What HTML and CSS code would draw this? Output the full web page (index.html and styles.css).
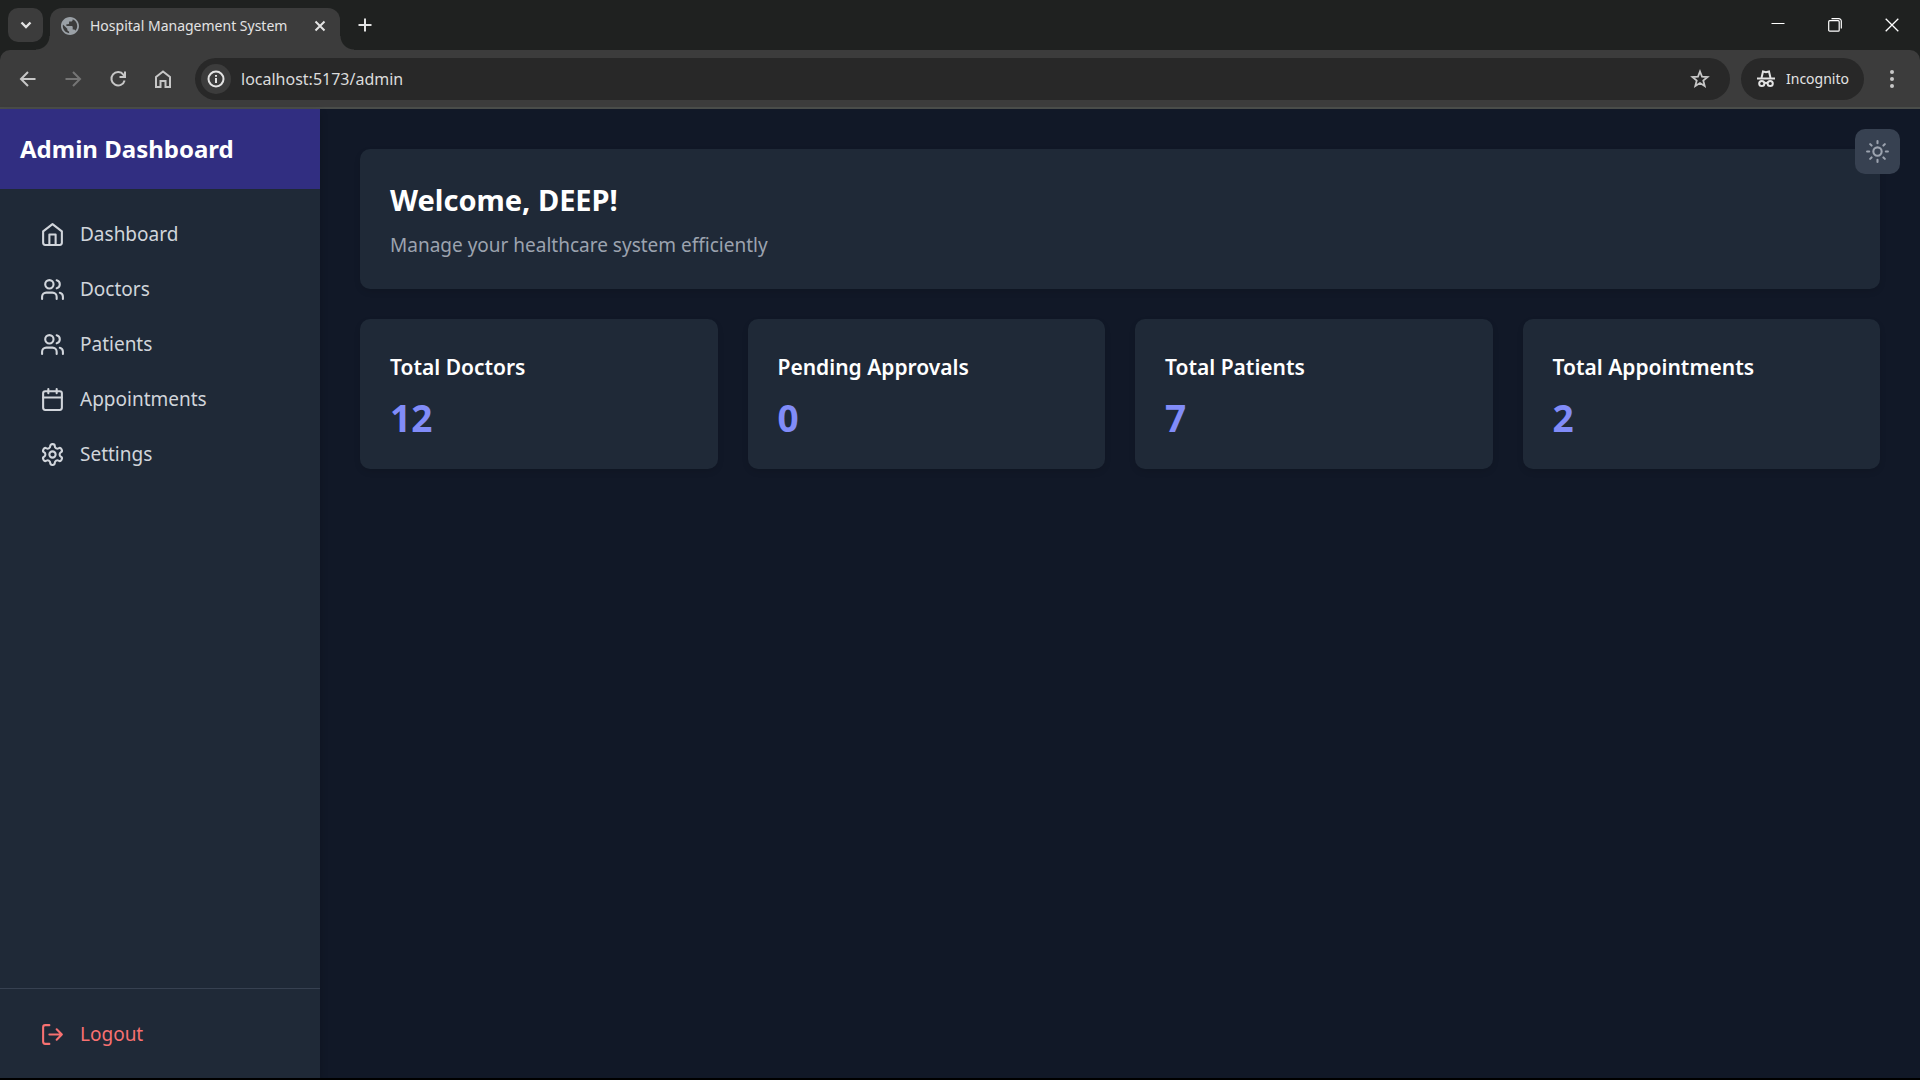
FILE: index.html
```html
<!DOCTYPE html>
<html lang="en">
<head>
<meta charset="utf-8">
<title>Hospital Management System</title>
<link rel="stylesheet" href="styles.css">
</head>
<body>
<div class="browser">
  <header class="tabstrip">
    <button class="tab-search" aria-label="Search tabs"><svg width="16" height="16" viewBox="0 0 16 16" fill="none" stroke="currentColor" stroke-width="2.4"><path d="M3.500 5.500 8 10l4.500-4.500"/></svg></button>
    <div class="tab">
      <svg class="globe" width="18" height="18" viewBox="2 2 20 20"><path fill="#9aa0a6" d="M12 2C6.480 2 2 6.480 2 12s4.480 10 10 10 10-4.480 10-10S17.520 2 12 2zm-1 17.930c-3.950-.49-7-3.850-7-7.930 0-.62.08-1.210.21-1.790L9 15v1c0 1.100.9 2 2 2v1.930zm6.900-2.540c-.26-.81-1-1.390-1.900-1.390h-1v-3c0-.55-.45-1-1-1H8v-2h2c.55 0 1-.45 1-1V7h2c1.100 0 2-.9 2-2v-.41c2.930 1.190 5 4.060 5 7.410 0 2.080-.8 3.970-2.100 5.390z"/></svg>
      <span class="tab-title">Hospital Management System</span>
      <button class="tab-close" aria-label="Close tab"><svg width="12" height="12" viewBox="0 0 12 12" fill="none" stroke="currentColor" stroke-width="2"><path d="m1.500 1.500 9 9m0-9-9 9"/></svg></button>
    </div>
    <button class="new-tab" aria-label="New tab"><svg width="14" height="14" viewBox="0 0 14 14" fill="none" stroke="currentColor" stroke-width="2"><path d="M7 .5v13M.5 7h13"/></svg></button>
    <div class="window-controls">
      <button aria-label="Minimize"><svg width="14" height="14" viewBox="0 0 14 14" stroke="currentColor"><path d="M.5 5.500h13"/></svg></button>
      <button aria-label="Restore"><svg width="14" height="14" viewBox="0 0 14 14" fill="none" stroke="currentColor" stroke-width="1.200"><rect x=".7" y="2.700" width="10.500" height="10.500" rx="1"/><path d="M3.500.7h7.300a2.500 2.500 0 0 1 2.500 2.500v7.300"/></svg></button>
      <button aria-label="Close"><svg width="14" height="14" viewBox="0 0 14 14" stroke="currentColor" stroke-width="1.300"><path d="m.7.7 12.600 12.600m0-12.600L.7 13.300"/></svg></button>
    </div>
  </header>
  <div class="toolbar">
    <button class="tool" aria-label="Back"><svg width="20" height="20" viewBox="0 0 20 20" fill="none" stroke="currentColor" stroke-width="2"><path d="M17.500 10H3.500M10 3l-7 7 7 7"/></svg></button>
    <button class="tool tool-disabled" aria-label="Forward" disabled><svg width="20" height="20" viewBox="0 0 20 20" fill="none" stroke="currentColor" stroke-width="2"><path d="M2.500 10h14M10 3l7 7-7 7"/></svg></button>
    <button class="tool" aria-label="Reload"><svg width="20" height="20" viewBox="0 0 20 20" fill="none" stroke="currentColor" stroke-width="2"><path d="M16.600 11.500A6.700 6.700 0 1 1 15.500 5.800L16.500 7.500M17 2.500V8h-5.500"/></svg></button>
    <button class="tool" aria-label="Home"><svg width="20" height="20" viewBox="0 0 20 20" fill="none" stroke="currentColor" stroke-width="2"><path d="M3 8 10 2.500 17 8v10h-4.500v-6h-5v6H3z"/></svg></button>
    <div class="omnibox">
      <button class="site-info" aria-label="Site information"><svg width="18" height="18" viewBox="0 0 18 18" fill="none" stroke="currentColor" stroke-width="2"><circle cx="9" cy="9" r="7.500"/><path d="M9 8v5M9 5v1.800"/></svg></button>
      <input class="url" type="text" aria-label="Address" value="localhost:5173/admin">
      <button class="bookmark" aria-label="Bookmark this page"><svg width="20" height="20" viewBox="0 0 20 20" fill="none" stroke="currentColor" stroke-width="1.800"><path d="m10 2.500 2 5.100 5.600.4-4.300 3.600 1.400 5.500-4.700-3-4.700 3 1.400-5.500L2.400 8 8 7.600z"/></svg></button>
    </div>
    <button class="incognito"><svg width="20" height="20" viewBox="0 0 20 20" fill="none" stroke="currentColor" stroke-width="2"><path d="M1 9.500h18"/><path d="M5.500 9 7 2.500l3 .8 3-.8L14.500 9"/><circle cx="5.800" cy="14.500" r="2.600"/><circle cx="14.200" cy="14.500" r="2.600"/><path d="M8.400 14.300q1.600-1 3.200 0"/></svg>Incognito</button>
    <button class="menu" aria-label="Menu"><svg width="6" height="20" viewBox="0 0 6 20" fill="currentColor"><circle cx="3" cy="3" r="2"/><circle cx="3" cy="10" r="2"/><circle cx="3" cy="17" r="2"/></svg></button>
  </div>
  <div class="app">
    <aside class="sidebar">
      <h2 class="brand">Admin Dashboard</h2>
      <nav class="nav">
        <a class="nav-item" href="#dashboard"><svg class="icon" viewBox="0 0 24 24"><path d="m3 9 9-7 9 7v11a2 2 0 0 1-2 2H5a2 2 0 0 1-2-2z"/><path d="M9 22V12h6v10"/></svg>Dashboard</a>
        <a class="nav-item" href="#doctors"><svg class="icon" viewBox="0 0 24 24"><path d="M16 21v-2a4 4 0 0 0-4-4H6a4 4 0 0 0-4 4v2"/><circle cx="9" cy="7" r="4"/><path d="M22 21v-2a4 4 0 0 0-3-3.870M16 3.130a4 4 0 0 1 0 7.750"/></svg>Doctors</a>
        <a class="nav-item" href="#patients"><svg class="icon" viewBox="0 0 24 24"><path d="M16 21v-2a4 4 0 0 0-4-4H6a4 4 0 0 0-4 4v2"/><circle cx="9" cy="7" r="4"/><path d="M22 21v-2a4 4 0 0 0-3-3.870M16 3.130a4 4 0 0 1 0 7.750"/></svg>Patients</a>
        <a class="nav-item" href="#appointments"><svg class="icon" viewBox="0 0 24 24"><rect x="3" y="4" width="18" height="18" rx="2"/><path d="M8 2v4M16 2v4M3 10h18"/></svg>Appointments</a>
        <a class="nav-item" href="#settings"><svg class="icon" viewBox="0 0 24 24"><path d="M12.220 2h-.44a2 2 0 0 0-2 2v.18a2 2 0 0 1-1 1.730l-.43.25a2 2 0 0 1-2 0l-.15-.08a2 2 0 0 0-2.730.73l-.22.38a2 2 0 0 0 .73 2.730l.15.1a2 2 0 0 1 1 1.720v.51a2 2 0 0 1-1 1.740l-.15.09a2 2 0 0 0-.73 2.730l.22.38a2 2 0 0 0 2.730.73l.15-.08a2 2 0 0 1 2 0l.43.25a2 2 0 0 1 1 1.730V20a2 2 0 0 0 2 2h.44a2 2 0 0 0 2-2v-.18a2 2 0 0 1 1-1.730l.43-.25a2 2 0 0 1 2 0l.15.08a2 2 0 0 0 2.730-.73l.22-.39a2 2 0 0 0-.73-2.730l-.15-.08a2 2 0 0 1-1-1.740v-.5a2 2 0 0 1 1-1.740l.15-.09a2 2 0 0 0 .73-2.730l-.22-.38a2 2 0 0 0-2.730-.73l-.15.08a2 2 0 0 1-2 0l-.43-.25a2 2 0 0 1-1-1.730V4a2 2 0 0 0-2-2z"/><circle cx="12" cy="12" r="3"/></svg>Settings</a>
      </nav>
      <div class="sidebar-footer">
        <button class="nav-item logout"><svg class="icon" viewBox="0 0 24 24"><path d="M9 21H5a2 2 0 0 1-2-2V5a2 2 0 0 1 2-2h4M16 17l5-5-5-5M21 12H9"/></svg>Logout</button>
      </div>
    </aside>
    <main class="main">
      <section class="card">
        <h1 class="welcome">Welcome, DEEP!</h1>
        <p class="subtitle">Manage your healthcare system efficiently</p>
      </section>
      <section class="stats">
        <article class="card"><h3 class="stat-title">Total Doctors</h3><p class="stat-value">12</p></article>
        <article class="card"><h3 class="stat-title">Pending Approvals</h3><p class="stat-value">0</p></article>
        <article class="card"><h3 class="stat-title">Total Patients</h3><p class="stat-value">7</p></article>
        <article class="card"><h3 class="stat-title">Total Appointments</h3><p class="stat-value">2</p></article>
      </section>
    </main>
    <button class="theme-toggle" aria-label="Toggle theme"><svg class="icon" viewBox="0 0 24 24"><circle cx="12" cy="12" r="4"/><path d="M12 2v2M12 20v2M4.930 4.930l1.410 1.410M17.660 17.660l1.410 1.410M2 12h2M20 12h2M6.340 17.660l-1.410 1.410M19.070 4.930l-1.410 1.410"/></svg></button>
  </div>
</div>
</body>
</html>
```
FILE: styles.css
```css
* { box-sizing: border-box; margin: 0; padding: 0; }
body { font-family: "Noto Sans", "Open Sans", sans-serif; background: #1f2120; }
button { border: 0; background: none; color: inherit; font: inherit; display: flex; align-items: center; justify-content: center; }
svg { display: block; flex: none; }

.browser { min-height: 100vh; display: flex; flex-direction: column; border-bottom: 2px solid #000; }

.tabstrip { display: flex; align-items: center; height: 50px; padding-left: 8px; color: #e3e3e3; }
.tab-search { width: 35px; height: 34px; border-radius: 10px; background: #3c3c3c; }
.tab { position: relative; display: flex; align-items: center; align-self: flex-end; width: 290px; height: 42px; margin-left: 7px; padding: 0 13px 7px 11px; border-radius: 12px 12px 0 0; background: #3c3c3c; }
.tab::before, .tab::after { content: ""; position: absolute; bottom: 0; width: 14px; height: 14px; }
.tab::before { right: 100%; background: radial-gradient(circle at 0 0, transparent 13px, #3c3c3c 14px); }
.tab::after { left: 100%; background: radial-gradient(circle at 100% 0, transparent 13px, #3c3c3c 14px); }
.tab-title { flex: 1; margin-left: 11px; font-size: 14px; line-height: 20px; white-space: nowrap; }
.tab-close, .new-tab { width: 14px; height: 14px; }
.new-tab { margin-left: 18px; }
.window-controls { display: flex; margin-left: auto; color: #fff; }
.window-controls button { width: 57px; height: 50px; }

.toolbar { display: flex; align-items: center; height: 59px; padding-left: 8px; border-radius: 10px 10px 0 0; border-bottom: 2px solid #4a4d4a; background: #3c3c3c; color: #c7c7c7; }
.tool { width: 40px; height: 40px; margin-right: 5px; }
.tool-disabled { color: #757575; }
.omnibox { flex: 1; display: flex; align-items: center; height: 42px; margin-left: 7px; padding: 0 20px 0 6px; border-radius: 21px; background: #282828; }
.site-info { width: 30px; height: 30px; border-radius: 50%; background: #3c3c3c; color: #e3e3e3; }
.url { flex: 1; min-width: 0; margin-left: 10px; border: 0; outline: 0; background: transparent; color: #dcdcdc; font: 16px/24px "Noto Sans", "Open Sans", sans-serif; }
.incognito { gap: 10px; width: 123px; height: 42px; margin-left: 11px; border-radius: 21px; background: #282828; color: #e3e3e3; font-size: 14px; }
.menu { width: 56px; height: 40px; }

.app { position: relative; flex: 1; display: flex; background: #111827; }
.icon { width: 25px; height: 25px; fill: none; stroke: currentColor; stroke-width: 2; stroke-linecap: round; stroke-linejoin: round; }

.sidebar { display: flex; flex-direction: column; width: 320px; flex: none; background: #1f2937; box-shadow: 0 4px 8px rgba(0, 0, 0, .2); }
.brand { padding: 20px; background: #312e81; color: #fff; font-size: 24px; line-height: 40px; font-weight: 700; }
.nav { flex: 1; display: flex; flex-direction: column; gap: 5px; padding: 20px; }
.nav-item { display: flex; align-items: center; justify-content: flex-start; gap: 15px; width: 100%; padding: 10px 20px; color: #d1d5db; font-size: 19px; line-height: 30px; text-decoration: none; }
.sidebar-footer { padding: 20px 20px 19px; border-top: 1px solid #374151; }
.logout { color: #f87171; }

.main { flex: 1; min-width: 0; padding: 40px; }
.card { padding: 31px 30px 29px; border-radius: 10px; background: #1f2937; box-shadow: 0 3px 6px rgba(0, 0, 0, .1); }
.welcome { color: #fff; font-size: 29px; line-height: 40px; font-weight: 700; }
.subtitle { margin-top: 10px; color: #9ca3af; font-size: 19px; line-height: 30px; }
.stats { display: grid; grid-template-columns: repeat(4, 1fr); gap: 30px; margin-top: 30px; }
.stat-title { color: #fff; font-size: 21px; line-height: 35px; font-weight: 600; }
.stat-value { margin-top: 10px; color: #818cf8; font-size: 37px; line-height: 45px; font-weight: 700; }
.theme-toggle { position: absolute; top: 20px; right: 20px; width: 45px; height: 45px; border-radius: 10px; background: #374151; color: #9ca3af; }
```
